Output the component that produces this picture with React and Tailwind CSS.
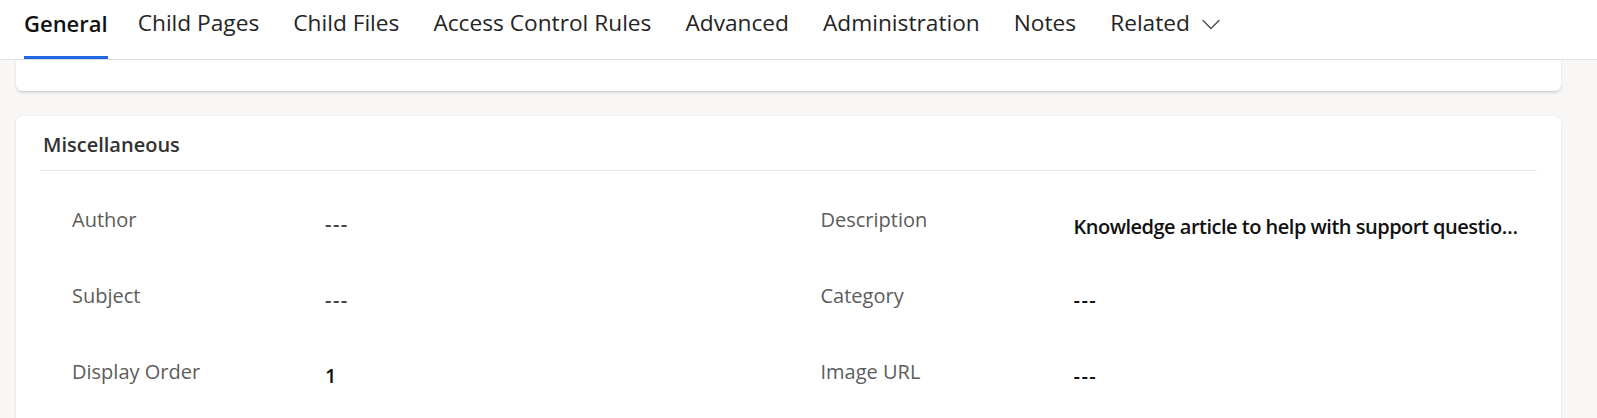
import React from "react";

const tabs = [
  "General",
  "Child Pages",
  "Child Files",
  "Access Control Rules",
  "Advanced",
  "Administration",
  "Notes",
];

function Chevron() {
  return (
    <svg width="18" height="11" viewBox="0 0 18 11" fill="none" className="mt-[2px]">
      <path d="M1 1.5 L9 9.5 L17 1.5" stroke="#424242" strokeWidth="1.2" strokeLinecap="round" strokeLinejoin="round" />
    </svg>
  );
}

function Field({ label, value, strong, low }) {
  const dash = value === "---";
  return (
    <div className="flex h-[76px] pl-[32px] pr-[15px]">
      <div className="w-[253px] shrink-0 text-[20px] leading-[28px] text-[#5c5c5c]">{label}</div>
      <div
        className={
          "min-w-0 flex-1 truncate text-[20px] leading-[28px] font-semibold " +
          (low ? "pt-[7px] " : "pt-[4px] ") +
          (dash ? "tracking-[1.5px] " : "tracking-[-0.5px] ") +
          (strong ? "text-[#111111]" : "text-[#444444]")
        }
      >
        {value}
      </div>
    </div>
  );
}

export default function App() {
  return (
    <div className="h-screen w-full overflow-hidden bg-[#f8f7f6] font-['Open_Sans',sans-serif]">
      <div className="flex h-[60px] gap-[34px] border-b border-[#e0e0e0] bg-white pl-[24px]">
        {tabs.map((t, i) => (
          <div
            key={t}
            className={
              "h-full border-b-[3px] pt-[8px] leading-[30px] whitespace-nowrap " +
              (i === 0
                ? "mr-[-4px] border-[#2266e3] text-[22px] font-semibold text-[#111111]"
                : "border-transparent text-[22.7px] text-[#242424]")
            }
          >
            {t}
          </div>
        ))}
        <div className="h-full border-b-[3px] border-transparent pt-[8px]">
          <div className="flex h-[30px] items-center gap-[12px] text-[22.7px] leading-[30px] text-[#242424]">
            <span>Related</span>
            <Chevron />
          </div>
        </div>
      </div>

      <div className="pl-[16px] pr-[36px]">
        <div className="h-[31px] rounded-b-md bg-white shadow-[0_1.6px_3.6px_rgba(0,0,0,0.1),0_0.3px_0.9px_rgba(0,0,0,0.08)]" />

        <div className="mt-[25px] rounded-md bg-white px-[24px] shadow-[0_1.6px_3.6px_rgba(0,0,0,0.1),0_0.3px_0.9px_rgba(0,0,0,0.08)]">
          <div className="border-b border-[#e6e6e6] pt-[15px] pb-[11px] pl-[3px] text-[20px] leading-[28px] font-semibold text-[#323130]">
            Miscellaneous
          </div>
          <div className="grid grid-cols-2 pt-[35px]">
            <div className="flex flex-col">
              <Field label="Author" value="---" />
              <Field label="Subject" value="---" />
              <Field label="Display Order" value="1" strong />
            </div>
            <div className="flex flex-col">
              <Field
                label="Description"
                value="Knowledge article to help with support questions and common issues"
                strong
                low
              />
              <Field label="Category" value="---" strong />
              <Field label="Image URL" value="---" strong />
            </div>
          </div>
        </div>
      </div>
    </div>
  );
}
